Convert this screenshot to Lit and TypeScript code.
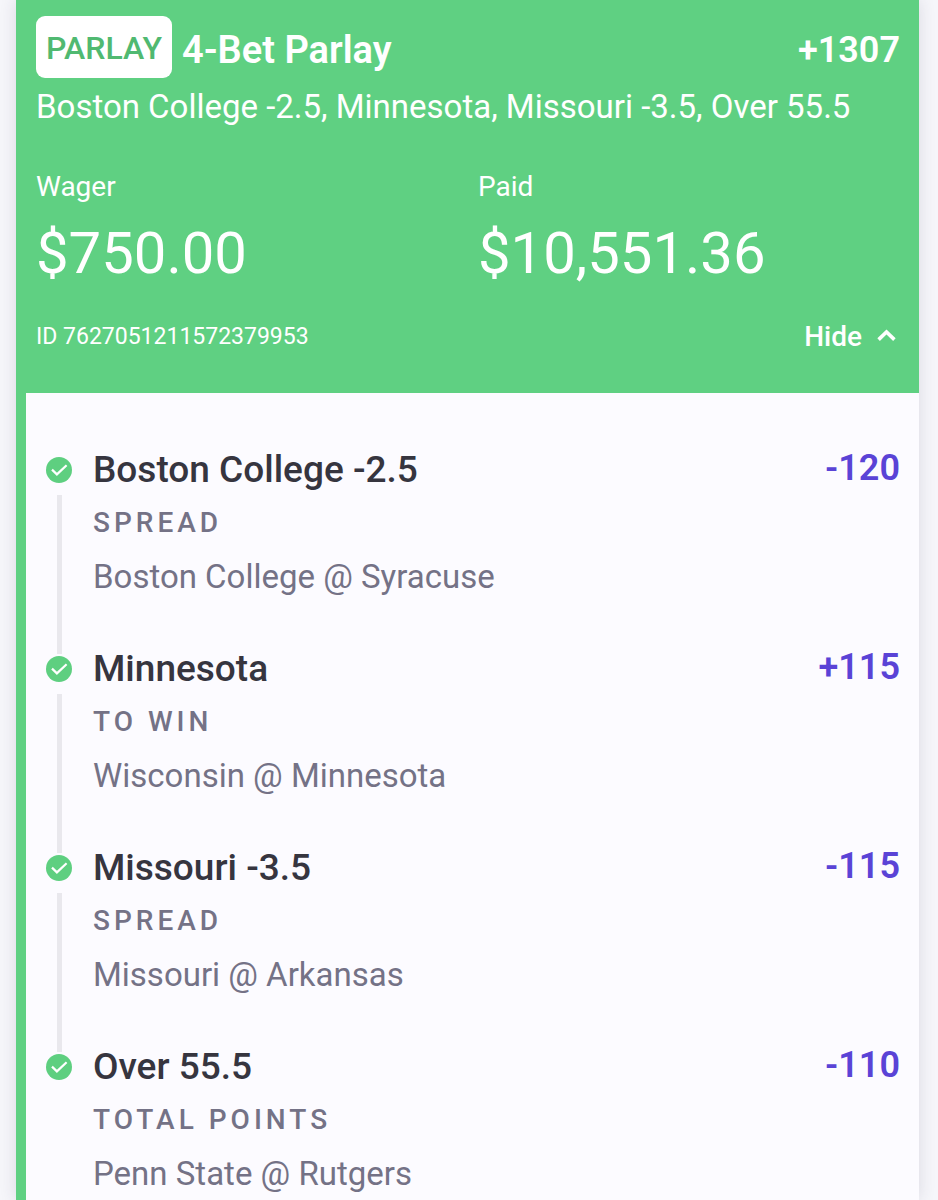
import { LitElement, html, css, svg } from "lit";
import { customElement, property, state } from "lit/decorators.js";

interface Leg {
  pick: string;
  market: string;
  matchup: string;
  odds: string;
}

const LEGS: Leg[] = [
  { pick: "Boston College -2.5", market: "SPREAD", matchup: "Boston College @ Syracuse", odds: "-120" },
  { pick: "Minnesota", market: "TO WIN", matchup: "Wisconsin @ Minnesota", odds: "+115" },
  { pick: "Missouri -3.5", market: "SPREAD", matchup: "Missouri @ Arkansas", odds: "-115" },
  { pick: "Over 55.5", market: "TOTAL POINTS", matchup: "Penn State @ Rutgers", odds: "-110" },
];

@customElement("bet-leg")
export class BetLeg extends LitElement {
  @property({ attribute: false }) leg!: Leg;
  @property({ type: Boolean, reflect: true }) last = false;

  static styles = css`
    :host {
      display: grid;
      grid-template-columns: 26px 1fr auto;
      column-gap: 21px;
    }
    .track {
      display: flex;
      flex-direction: column;
      align-items: center;
      padding-top: 2px;
    }
    .check {
      display: block;
      flex: none;
      width: 26px;
      height: 26px;
    }
    .line {
      flex: 1;
      width: 5px;
      margin-top: 12px;
      background: #e9e8ed;
    }
    .details {
      padding-bottom: 57px;
    }
    :host([last]) .details {
      padding-bottom: 0;
    }
    .pick,
    .odds {
      margin: 0;
      font-size: 37px;
      line-height: 30px;
      font-weight: 500;
      color: #36353f;
    }
    .odds {
      font-size: 36px;
      line-height: 26px;
      font-weight: 600;
      color: #5a43d6;
    }
    .market {
      margin: 22px 0 0;
      font-size: 28px;
      line-height: 32px;
      font-weight: 500;
      letter-spacing: 4px;
      color: #747286;
    }
    .matchup {
      margin: 18px 0 0;
      font-size: 33px;
      line-height: 40px;
      color: #747286;
    }
  `;

  render() {
    return html`
      <div class="track">
        <svg class="check" viewBox="0 0 26 26" role="img" aria-label="Won">
          <circle cx="13" cy="13" r="13" fill="#5ecf80" />
          <path d="M6 12.6 10.9 17.4 20.6 8.2" fill="none" stroke="#fff" stroke-width="2.2" />
        </svg>
        ${this.last ? "" : html`<div class="line"></div>`}
      </div>
      <div class="details">
        <h2 class="pick">${this.leg.pick}</h2>
        <p class="market">${this.leg.market}</p>
        <p class="matchup">${this.leg.matchup}</p>
      </div>
      <p class="odds">${this.leg.odds}</p>
    `;
  }
}

@customElement("app-root")
export class AppRoot extends LitElement {
  @state() private open = true;

  static styles = css`
    :host {
      display: block;
      padding: 0 19px 0 16px;
      background: #f6f6fa;
      font-family: Roboto, "Liberation Sans", sans-serif;
    }
    .card {
      min-height: 100vh;
      box-sizing: border-box;
      border-left: 10px solid #5fd082;
      background: #fcfbff;
      box-shadow: 0 0 16px rgba(50, 45, 80, 0.14);
    }
    .header {
      padding: 16px 19px 40px 10px;
      background: #5fd082;
      color: #fff;
    }
    .top {
      display: flex;
      align-items: flex-end;
      gap: 10px;
    }
    .badge {
      padding: 2px 10px 0;
      border-radius: 9px;
      background: #fff;
      color: #50b971;
      font-size: 32px;
      line-height: 60px;
      font-weight: 500;
    }
    .title,
    .total {
      margin: 0;
      font-size: 38px;
      line-height: 56px;
      font-weight: 600;
    }
    .total {
      margin-left: auto;
      font-size: 36px;
    }
    .summary {
      margin: 9px 0 0;
      font-size: 33px;
      line-height: 40px;
    }
    .amounts {
      display: grid;
      grid-template-columns: 1fr 1fr;
      column-gap: 20px;
      margin: 44px 0 0;
    }
    .label {
      font-size: 28px;
      line-height: 32px;
    }
    .amount {
      margin: 18px 0 0;
      font-size: 58px;
      line-height: 64px;
    }
    .foot {
      display: flex;
      align-items: center;
      justify-content: space-between;
      margin-top: 36px;
    }
    .id {
      font-size: 23px;
      line-height: 32px;
    }
    .toggle {
      display: flex;
      align-items: center;
      gap: 15px;
      padding: 0 4px 0 0;
      border: 0;
      background: none;
      color: inherit;
      font: 500 28px/32px Roboto, "Liberation Sans", sans-serif;
      cursor: pointer;
    }
    .chevron {
      width: 19px;
      height: 17px;
    }
    .chevron.closed {
      transform: rotate(180deg);
    }
    .legs {
      margin: 0;
      padding: 62px 19px 0 20px;
      list-style: none;
    }
  `;

  render() {
    return html`
      <article class="card">
        <header class="header">
          <div class="top">
            <span class="badge">PARLAY</span>
            <h1 class="title">4-Bet Parlay</h1>
            <p class="total">+1307</p>
          </div>
          <p class="summary">Boston College -2.5, Minnesota, Missouri -3.5, Over 55.5</p>
          <dl class="amounts">
            <div>
              <dt class="label">Wager</dt>
              <dd class="amount">$750.00</dd>
            </div>
            <div>
              <dt class="label">Paid</dt>
              <dd class="amount">$10,551.36</dd>
            </div>
          </dl>
          <div class="foot">
            <span class="id">ID 7627051211572379953</span>
            <button
              class="toggle"
              type="button"
              aria-expanded=${this.open ? "true" : "false"}
              @click=${() => (this.open = !this.open)}
            >
              ${this.open ? "Hide" : "Show"}
              <svg class="chevron ${this.open ? "" : "closed"}" viewBox="0 0 19 17" aria-hidden="true">
                ${svg`<path d="M1.6 10.6 9.5 2.9l7.9 7.7" fill="none" stroke="#fff" stroke-width="3.6" />`}
              </svg>
            </button>
          </div>
        </header>
        ${this.open
          ? html`<ul class="legs">
              ${LEGS.map(
                (leg, i) => html`<li><bet-leg .leg=${leg} ?last=${i === LEGS.length - 1}></bet-leg></li>`
              )}
            </ul>`
          : ""}
      </article>
    `;
  }
}
